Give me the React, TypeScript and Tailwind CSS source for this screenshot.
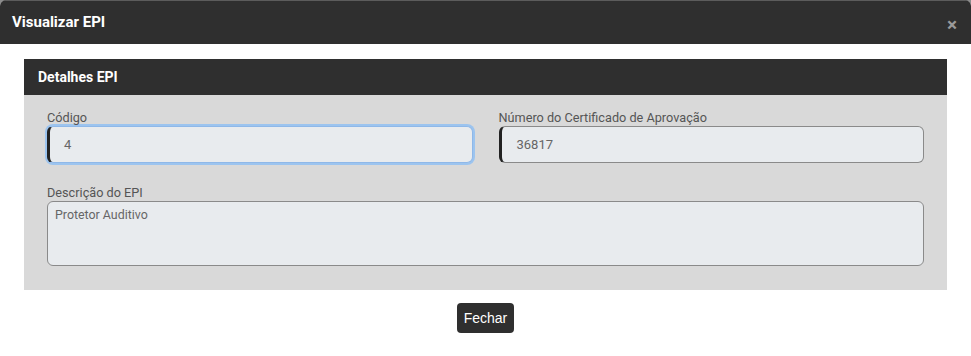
export default function App() {
    return (
        <div className="w-[971px] h-[356px] bg-[#8c8c8c] font-['Roboto','Liberation_Sans',sans-serif]">
            <div className="h-full bg-white rounded-t-[6px] overflow-hidden">
                <div className="h-[44px] bg-[#2f2f2f] border-t border-[#5c5c5c] flex items-center justify-between pl-[12px] pr-[14px]">
                    <h1 className="text-white font-bold text-[15px] leading-none">Visualizar EPI</h1>
                    <span className="text-[#9a9a9a] font-bold text-[19px] leading-none mt-[3px]">×</span>
                </div>

                <div className="mx-[24px] mt-[15px]">
                    <div className="h-[36px] bg-[#2f2f2f] flex items-center px-[14px]">
                        <h2 className="text-white font-bold text-[14px] leading-none">Detalhes EPI</h2>
                    </div>
                    <div className="bg-[#d9d9d9] px-[23px] pt-[16px] pb-[24px]">
                        <div className="grid grid-cols-2 gap-x-[26px]">
                            <div>
                                <label className="block text-[12.7px] leading-[14px] mb-[1px] text-[#555555]">Código</label>
                                <div className="h-[37px] bg-[#e8ebee] rounded-[6px] border border-[#8fb8e8] border-l-[3px] border-l-[#222222] shadow-[0_0_0_2px_#9cc4ef] flex items-center pl-[14px] text-[13px] text-[#666666]">
                                    4
                                </div>
                            </div>
                            <div>
                                <label className="block text-[12.7px] leading-[14px] mb-[1px] text-[#555555]">Número do Certificado de Aprovação</label>
                                <div className="h-[37px] bg-[#e8ebee] rounded-[6px] border border-[#8a8a8a] border-l-[3px] border-l-[#222222] flex items-center pl-[15px] text-[13px] text-[#666666]">
                                    36817
                                </div>
                            </div>
                        </div>
                        <div className="mt-[23px]">
                            <label className="block text-[12.7px] leading-[14px] mb-[1px] text-[#555555]">Descrição do EPI</label>
                            <div className="h-[65px] bg-[#e8ebee] rounded-[6px] border border-[#8a8a8a] pl-[7px] pt-[4px] text-[12.4px] text-[#666666]">
                                Protetor Auditivo
                            </div>
                        </div>
                    </div>
                </div>

                <div className="flex justify-center mt-[13px]">
                    <button className="h-[30px] w-[57px] bg-[#2f2f2f] rounded-[4px] text-white text-[14px] font-['Liberation_Sans',sans-serif]">
                        Fechar
                    </button>
                </div>
            </div>
        </div>
    );
}
